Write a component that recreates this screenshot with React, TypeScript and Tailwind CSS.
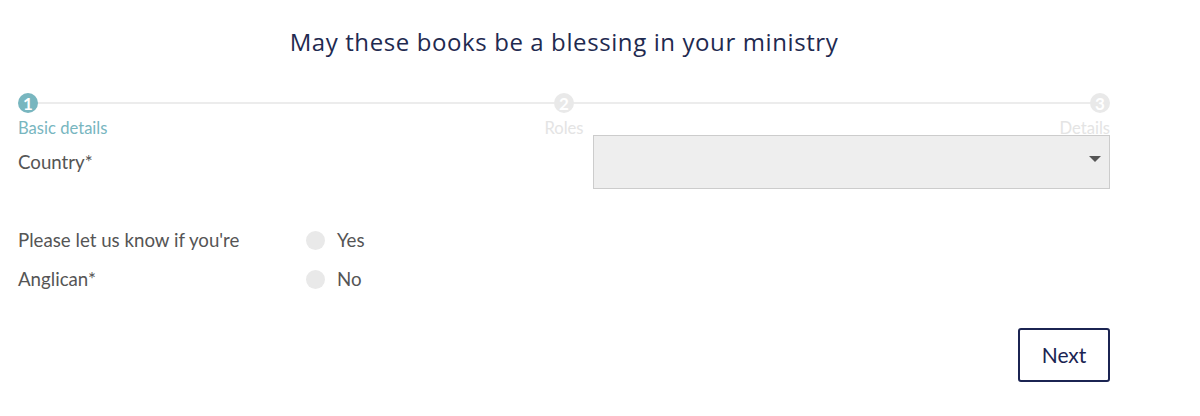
import { useState } from 'react';

const steps = [
  { n: 1, label: 'Basic details', active: true },
  { n: 2, label: 'Roles', active: false },
  { n: 3, label: 'Details', active: false },
];

const App = () => {
  const [anglican, setAnglican] = useState<string | null>(null);

  return (
    <div className="w-[1200px] h-[416px] bg-white font-['Lato',sans-serif] text-[#555555]">
      <div className="ml-[18px] w-[1092px]">
        {/* Title */}
        <h1 className="pt-[25px] h-[60px] text-center font-['Open_Sans',sans-serif] text-[24px] leading-[34px] tracking-[0.6px] text-[#1f2a50]">
          May these books be a blessing in your ministry
        </h1>

        {/* Stepper */}
        <div className="relative mt-[33px] flex h-5 items-center justify-between">
          <div className="absolute left-2 right-2 top-[9px] h-[2px] bg-[#ececec]" />
          {steps.map((s) => (
            <div
              key={s.n}
              className={`relative z-10 flex h-5 w-5 items-center justify-center rounded-full text-[17px] font-bold leading-none text-white ${
                s.active ? 'bg-[#78b6bf]' : 'bg-[#e9e9e9]'
              }`}
            >
              {s.n}
            </div>
          ))}
        </div>
        <div className="grid h-[25px] grid-cols-3 items-end text-[16.6px] leading-[20px]">
          <span className="text-[#78b6bf]">Basic details</span>
          <span className="text-center text-[#e4e4e4]">Roles</span>
          <span className="text-right text-[#e4e4e4]">Details</span>
        </div>

        {/* Country */}
        <div className="relative z-10 mt-[-3px] flex h-[54px] items-center">
          <label className="w-[575px] text-[18.7px]">Country*</label>
          <div className="relative h-[54px] flex-1 border border-[#cccccc] bg-[#eeeeee]">
            <div className="absolute right-[8px] top-[20px] h-0 w-0 border-x-[6px] border-t-[6px] border-x-transparent border-t-[#555555]" />
          </div>
        </div>

        {/* Anglican */}
        <div className="mt-[32px] flex">
          <div className="w-[288px] text-[18.7px] leading-[39px]">
            <div>Please let us know if you're</div>
            <div>Anglican*</div>
          </div>
          <div className="flex flex-col text-[18.7px] leading-[39px]">
            {['Yes', 'No'].map((opt) => (
              <button
                key={opt}
                onClick={() => setAnglican(opt)}
                className="flex items-center"
              >
                <span
                  className={`h-[19px] w-[19px] rounded-full ${
                    anglican === opt ? 'bg-[#78b6bf]' : 'bg-[#e9e9e9]'
                  }`}
                />
                <span className="ml-[12px]">{opt}</span>
              </button>
            ))}
          </div>
        </div>

        {/* Next */}
        <div className="mt-[29px] flex justify-end">
          <button className="h-[54px] w-[92px] rounded-[3px] border-2 border-[#1b2452] text-[21px] text-[#1b2452]">
            Next
          </button>
        </div>
      </div>
    </div>
  );
};

export default App;
